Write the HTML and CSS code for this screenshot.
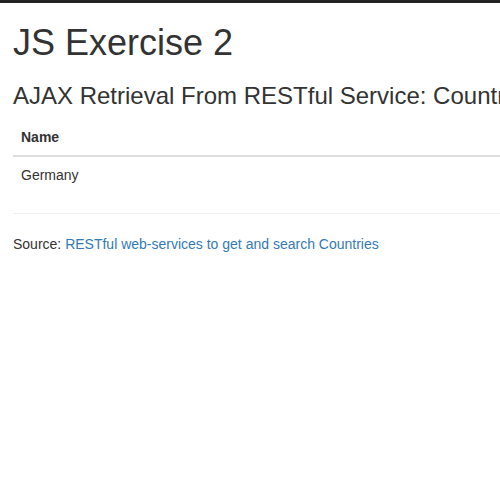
FILE: index.html
```html
<!DOCTYPE html>
<html>
<head>
<meta charset="utf-8">
<link rel="stylesheet" href="styles.css">
</head>
<body>
<div class="container">
  <h1 class="title">JS Exercise 2</h1>
  <h2 class="subtitle">AJAX Retrieval From RESTful Service: Countries</h2>
  <table class="table">
    <thead>
      <tr><th>Name</th></tr>
    </thead>
    <tbody>
      <tr><td>Germany</td></tr>
    </tbody>
  </table>
  <hr class="rule">
  <p class="source">Source: <a class="link" href="#">RESTful web-services to get and search Countries</a></p>
</div>
</body>
</html>
```
FILE: styles.css
```css
html, body {
  margin: 0;
  padding: 0;
  overflow: hidden;
}
body {
  border-top: 3px solid #222;
  font-family: "Liberation Sans", Arial, sans-serif;
  font-size: 14px;
  line-height: 20px;
  color: #333;
  background: #fff;
}
.container {
  padding: 0 0 0 13px;
  width: 700px;
}
.title {
  font-size: 36px;
  font-weight: 500;
  line-height: 1.1;
  margin: 20px 0 10px;
}
.subtitle {
  font-size: 24px;
  font-weight: 500;
  line-height: 1.1;
  margin: 20px 0 10px;
  white-space: nowrap;
}
.table {
  width: 100%;
  border-collapse: collapse;
  border-spacing: 0;
  margin-bottom: 20px;
}
.table th, .table td {
  text-align: left;
  padding: 8px;
  line-height: 20px;
  vertical-align: top;
}
.table th {
  font-weight: bold;
  border-bottom: 2px solid #ddd;
  padding-top: 8px;
}
.rule {
  margin: 20px 0;
  border: 0;
  border-top: 1px solid #eee;
}
.source {
  margin: 0 0 10px;
}
.link {
  color: #337ab7;
  text-decoration: none;
}
```
